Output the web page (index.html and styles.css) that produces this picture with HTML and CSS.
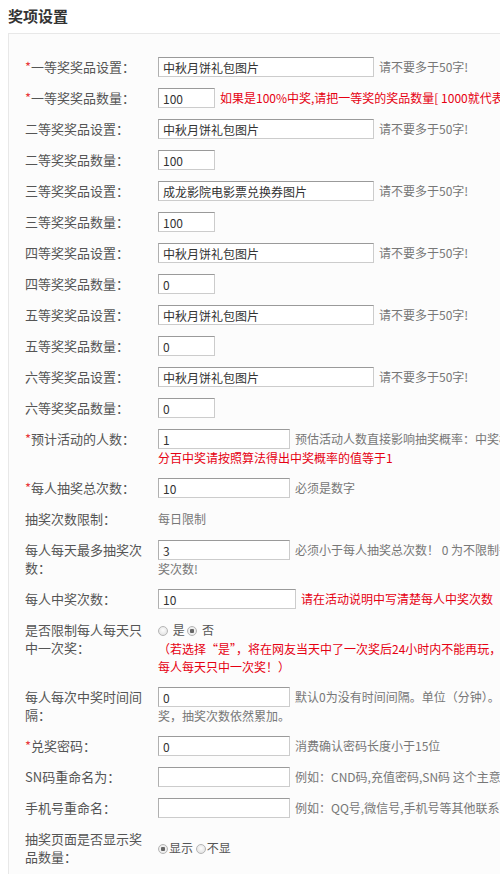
FILE: index.html
```html
<!DOCTYPE html>
<html lang="zh-CN">
<head>
  <meta charset="utf-8" />
  <title>奖项设置</title>
  <link rel="stylesheet" href="styles.css">
</head>

<body>
  <h2 class="title">奖项设置</h2>

  <div class="panel">
    <div class="row">
      <label class="lbl"><i>*</i>一等奖奖品设置：</label>
      <div class="field"><input class="ipt ipt-l" value="中秋月饼礼包图片"><span class="tip">请不要多于50字!</span></div>
    </div>
    <div class="row">
      <label class="lbl"><i>*</i>一等奖奖品数量：</label>
      <div class="field"><input class="ipt ipt-s" value="100"><span class="warn">如果是100%中奖,请把一等奖的奖品数量[ 1000就代表一千份奖品 ]设置为预计活动人数</span></div>
    </div>
    <div class="row">
      <label class="lbl">二等奖奖品设置：</label>
      <div class="field"><input class="ipt ipt-l" value="中秋月饼礼包图片"><span class="tip">请不要多于50字!</span></div>
    </div>
    <div class="row">
      <label class="lbl">二等奖奖品数量：</label>
      <div class="field"><input class="ipt ipt-s" value="100"></div>
    </div>
    <div class="row">
      <label class="lbl">三等奖奖品设置：</label>
      <div class="field"><input class="ipt ipt-l" value="成龙影院电影票兑换券图片"><span class="tip">请不要多于50字!</span></div>
    </div>
    <div class="row">
      <label class="lbl">三等奖奖品数量：</label>
      <div class="field"><input class="ipt ipt-s" value="100"></div>
    </div>
    <div class="row">
      <label class="lbl">四等奖奖品设置：</label>
      <div class="field"><input class="ipt ipt-l" value="中秋月饼礼包图片"><span class="tip">请不要多于50字!</span></div>
    </div>
    <div class="row">
      <label class="lbl">四等奖奖品数量：</label>
      <div class="field"><input class="ipt ipt-s" value="0"></div>
    </div>
    <div class="row">
      <label class="lbl">五等奖奖品设置：</label>
      <div class="field"><input class="ipt ipt-l" value="中秋月饼礼包图片"><span class="tip">请不要多于50字!</span></div>
    </div>
    <div class="row">
      <label class="lbl">五等奖奖品数量：</label>
      <div class="field"><input class="ipt ipt-s" value="0"></div>
    </div>
    <div class="row">
      <label class="lbl">六等奖奖品设置：</label>
      <div class="field"><input class="ipt ipt-l" value="中秋月饼礼包图片"><span class="tip">请不要多于50字!</span></div>
    </div>
    <div class="row">
      <label class="lbl">六等奖奖品数量：</label>
      <div class="field"><input class="ipt ipt-s" value="0"></div>
    </div>
    <div class="row">
      <label class="lbl"><i>*</i>预计活动的人数：</label>
      <div class="field"><input class="ipt ipt-m" value="1"><span class="tip">预估活动人数直接影响抽奖概率：中奖概率 = 奖品总数/(预估活动人数*每人抽奖次数) 如果要百</span><span class="more warn">分百中奖请按照算法得出中奖概率的值等于1</span></div>
    </div>
    <div class="row">
      <label class="lbl"><i>*</i>每人抽奖总次数：</label>
      <div class="field"><input class="ipt ipt-m" value="10"><span class="tip">必须是数字</span></div>
    </div>
    <div class="row">
      <label class="lbl">抽奖次数限制：</label>
      <div class="field"><span class="tip">每日限制</span></div>
    </div>
    <div class="row">
      <label class="lbl">每人每天最多抽奖次数：</label>
      <div class="field"><input class="ipt ipt-m" value="3"><span class="tip">必须小于每人抽奖总次数！ 0 为不限制每天抽奖次数，但总数仍受每人抽</span><span class="more tip">奖次数!</span></div>
    </div>
    <div class="row">
      <label class="lbl">每人中奖次数：</label>
      <div class="field"><input class="ipt ipt-m ipt-w" value="10"><span class="warn">请在活动说明中写清楚每人中奖次数</span></div>
    </div>
    <div class="row">
      <label class="lbl">是否限制每人每天只中一次奖：</label>
      <div class="field">
        <span class="choice"><input type="radio" class="radio" name="once"> 是 <input type="radio" class="radio" name="once" checked> 否</span>
        <span class="more warn">（若选择“是”，将在网友当天中了一次奖后24小时内不能再玩，即</span>
        <span class="more warn">每人每天只中一次奖！）</span>
      </div>
    </div>
    <div class="row">
      <label class="lbl">每人每次中奖时间间隔：</label>
      <div class="field"><input class="ipt ipt-m" value="0"><span class="tip">默认0为没有时间间隔。单位（分钟）。间隔时间内不能中</span><span class="more tip">奖，抽奖次数依然累加。</span></div>
    </div>
    <div class="row">
      <label class="lbl"><i>*</i>兑奖密码：</label>
      <div class="field"><input class="ipt ipt-m" value="0"><span class="tip">消费确认密码长度小于15位</span></div>
    </div>
    <div class="row">
      <label class="lbl">SN码重命名为：</label>
      <div class="field"><input class="ipt ipt-m" value=""><span class="tip">例如：CND码,充值密码,SN码 这个主意是用于兑奖时显示</span></div>
    </div>
    <div class="row">
      <label class="lbl">手机号重命名：</label>
      <div class="field"><input class="ipt ipt-m" value=""><span class="tip">例如：QQ号,微信号,手机号等其他联系方式</span></div>
    </div>
    <div class="row row-mid">
      <label class="lbl">抽奖页面是否显示奖品数量：</label>
      <div class="field">
        <span class="choice tight"><input type="radio" class="radio" name="show" checked>显示 <input type="radio" class="radio" name="show">不显</span>
      </div>
    </div>
  </div>
</body>
</html>
```

FILE: styles.css
```css
html, body {
  margin: 0;
  padding: 0;
  overflow: hidden;
  background: #fff;
  font-family: "Noto Sans CJK SC", "Microsoft YaHei", sans-serif;
  font-size: 13px;
  color: #555;
}

.title {
  margin: 0 0 8px 8px;
  padding-top: 7px;
  font-size: 15px;
  line-height: 18px;
  font-weight: bold;
  color: #333;
}

.panel {
  margin-left: 8px;
  width: 700px;
  padding: 23px 0 20px 16px;
  border: 1px solid #e8e8e8;
  background: #fcfcfc;
}

.row {
  display: flex;
  align-items: flex-start;
  margin-bottom: 11px;
}

.row-mid { align-items: center; }

.lbl {
  flex: none;
  width: 126px;
  margin-right: 7px;
  padding-top: 1px;
  line-height: 18px;
  color: #555;
}

.lbl i {
  font-style: normal;
  color: #e8383d;
}

.field {
  flex: 1;
  font-size: 12px;
  line-height: 20px;
  white-space: nowrap;
}

.more {
  display: block;
  line-height: 18px;
}

.ipt {
  box-sizing: border-box;
  height: 20px;
  margin: 0 5px 0 0;
  padding: 0 4px;
  vertical-align: top;
  border: 1px solid #ccc;
  border-top-color: #9a9a9a;
  border-left-color: #b0b0b0;
  background: #fff;
  font-family: inherit;
  font-size: 12px;
  color: #333;
}

.ipt-l { width: 216px; }
.ipt-m { width: 132px; }
.ipt-w { width: 138px; }
.ipt-s { width: 57px; }

.tip { color: #777; }
.warn { color: #e60012; }

.choice { color: #555; }

.radio {
  -webkit-appearance: none;
  appearance: none;
  box-sizing: border-box;
  width: 10px;
  height: 10px;
  margin: 0 2px 0 0;
  vertical-align: -1px;
  border: 1px solid #b5b5b5;
  border-radius: 50%;
  background: radial-gradient(circle at 50% 40%, #fdfdfd, #dcdcdc);
}

.radio:checked {
  background: radial-gradient(circle, #666 0, #666 2px, #f2f2f2 2.5px, #e0e0e0 100%);
}

.tight .radio { margin: 0 1px 0 0; }
```
